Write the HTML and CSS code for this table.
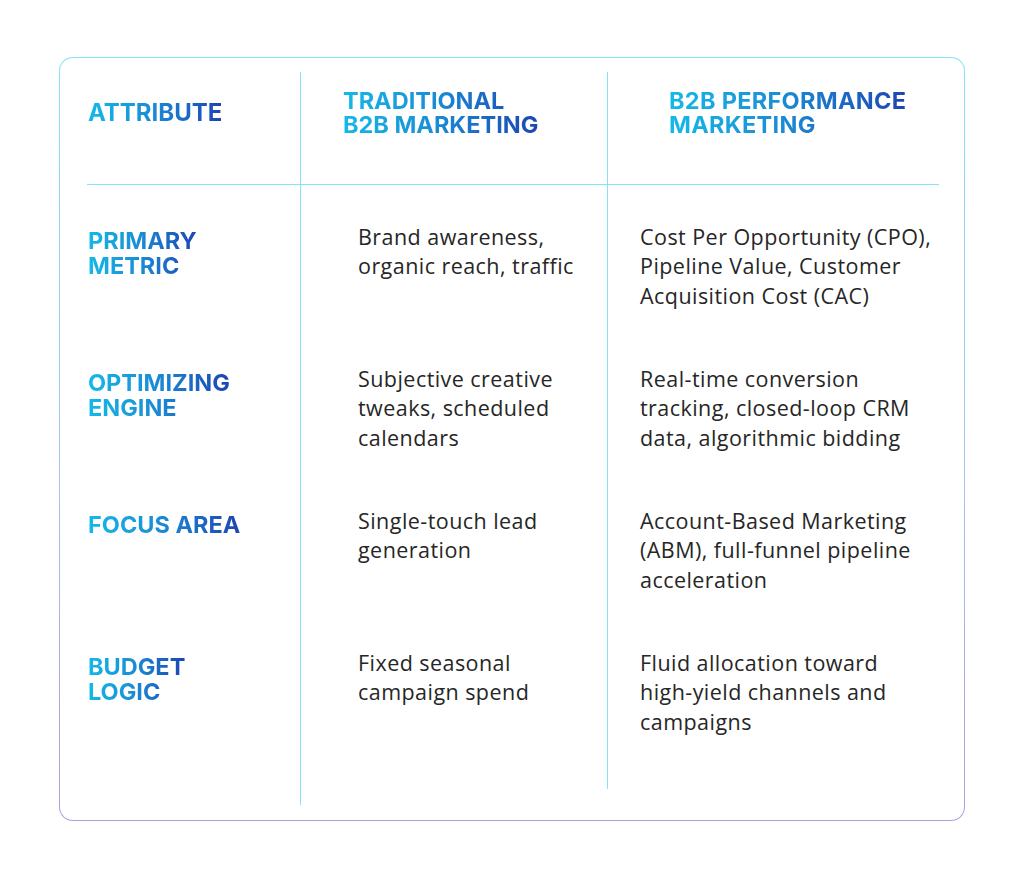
FILE: index.html
```html
<!DOCTYPE html>
<html lang="en">
<head>
<meta charset="utf-8">
<title>Traditional vs Performance B2B Marketing</title>
<link rel="stylesheet" href="styles.css">
</head>
<body>
<div class="card">
  <div class="col col-attr">
    <div class="head"><div class="head-inner"><span class="grad big">ATTRIBUTE</span></div></div>
    <div class="cell"><span class="grad label">PRIMARY<br>METRIC</span></div>
    <div class="cell"><span class="grad label">OPTIMIZING<br>ENGINE</span></div>
    <div class="cell"><span class="grad label">FOCUS AREA</span></div>
    <div class="cell last"><span class="grad label">BUDGET<br>LOGIC</span></div>
  </div>
  <div class="col col-trad">
    <div class="head"><div class="head-inner"><span class="grad label">TRADITIONAL<br>B2B MARKETING</span></div></div>
    <div class="cell"><p class="txt">Brand awareness,<br>organic reach, traffic</p></div>
    <div class="cell"><p class="txt">Subjective creative<br>tweaks, scheduled<br>calendars</p></div>
    <div class="cell"><p class="txt">Single-touch lead<br>generation</p></div>
    <div class="cell last"><p class="txt">Fixed seasonal<br>campaign spend</p></div>
  </div>
  <div class="col col-perf">
    <div class="head"><div class="head-inner"><span class="grad label">B2B PERFORMANCE<br>MARKETING</span></div></div>
    <div class="cell"><p class="txt">Cost Per Opportunity (CPO),<br>Pipeline Value, Customer<br>Acquisition Cost (CAC)</p></div>
    <div class="cell"><p class="txt">Real-time conversion<br>tracking, closed-loop CRM<br>data, algorithmic bidding</p></div>
    <div class="cell"><p class="txt">Account-Based Marketing<br>(ABM), full-funnel pipeline<br>acceleration</p></div>
    <div class="cell last"><p class="txt">Fluid allocation toward<br>high-yield channels and<br>campaigns</p></div>
  </div>
</div>
</body>
</html>
```

FILE: styles.css
```css
html, body {
  margin: 0;
  padding: 0;
  background: #ffffff;
}
body {
  width: 1024px;
  height: 878px;
  overflow: hidden;
  font-family: "Open Sans", "Liberation Sans", sans-serif;
}
.card {
  box-sizing: border-box;
  margin: 57px 0 0 59px;
  width: 906px;
  height: 764px;
  border: 1.5px solid transparent;
  border-radius: 14px;
  background:
    linear-gradient(#fff, #fff) padding-box,
    linear-gradient(180deg, #86e4f7 0%, #a7c2ea 55%, #aaa0dc 100%) border-box;
  display: flex;
  padding: 14px 0 15px 0;
}
.col {
  display: flex;
  flex-direction: column;
}
.col-attr {
  width: 240px;
}
.col-trad {
  width: 306px;
  border-left: 1px solid #84e3f6;
}
.col-perf {
  flex: 1;
  border-left: 1px solid #84e3f6;
  margin-bottom: 16px;
}
.head {
  box-sizing: border-box;
  height: 113px;
  border-bottom: 1px solid #84e3f6;
  padding-top: 16.5px;
}
.head-inner {
  height: 49px;
  display: flex;
  align-items: center;
}
.col-attr .head { margin-left: 27px; padding-left: 1px; }
.col-trad .head { padding-left: 42px; }
.col-perf .head { margin-right: 25px; padding-left: 61px; }

.cell {
  box-sizing: border-box;
  height: 142px;
}
.cell.last { flex: 1; }
.col-attr .cell { padding: 44px 0 0 28px; }
.col-trad .cell { padding: 37px 0 0 57px; }
.col-perf .cell { padding: 37px 0 0 32px; }

.grad {
  display: inline-block;
  font-family: "Inter", "Liberation Sans", sans-serif;
  font-weight: 700;
  background: linear-gradient(90deg, #14b9e8 0%, #1a8fd6 45%, #1d45b3 100%);
  -webkit-background-clip: text;
  background-clip: text;
  color: transparent;
  -webkit-text-fill-color: transparent;
}
.label {
  font-size: 23.5px;
  line-height: 24.5px;
}
.col-perf .label {
  letter-spacing: 0.3px;
}
.big {
  font-size: 24px;
  line-height: 28px;
}
.txt {
  margin: 0;
  font-size: 21.5px;
  line-height: 29.4px;
  letter-spacing: 0.45px;
  color: #262626;
  white-space: nowrap;
}
```
